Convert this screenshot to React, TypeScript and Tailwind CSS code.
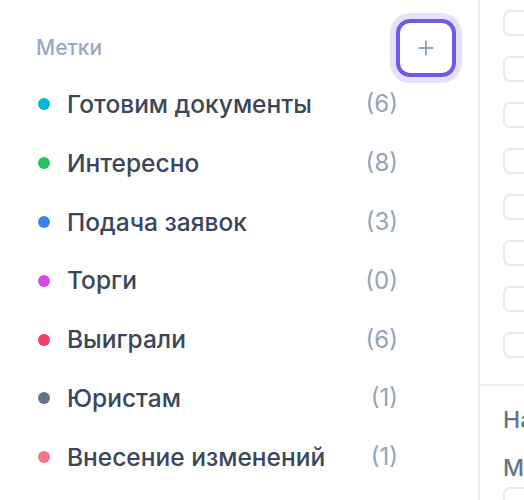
import React from 'react';

const labels = [
  { name: 'Готовим документы', count: 6, color: 'bg-[#06b6d4]' },
  { name: 'Интересно', count: 8, color: 'bg-[#22c55e]' },
  { name: 'Подача заявок', count: 3, color: 'bg-[#3b82f6]' },
  { name: 'Торги', count: 0, color: 'bg-[#d946ef]' },
  { name: 'Выиграли', count: 6, color: 'bg-[#f43f5e]' },
  { name: 'Юристам', count: 1, color: 'bg-[#64748b]' },
  { name: 'Внесение изменений', count: 1, color: 'bg-[#fb7185]' },
];

export default function App() {
  return (
    <div className="w-[524px] h-[500px] overflow-hidden bg-white flex font-['Inter',sans-serif]">
      {/* Labels panel */}
      <div className="w-[480px] shrink-0 border-r-2 border-[#e8ecf4] pl-[36px] pr-[22px] pt-[19px]">
        <div className="flex items-center justify-between">
          <span className="text-[21px] font-medium text-[#9aa8bd]">Метки</span>
          <button className="w-[60px] h-[58px] rounded-[14px] border-[4px] border-[#6c5ce7] shadow-[0_0_0_6px_#e6e2fb] flex items-center justify-center text-[#94a3b8]">
            <svg width="16" height="16" viewBox="0 0 16 16">
              <path d="M8 1.5v13M1.5 8h13" stroke="currentColor" strokeWidth="2" strokeLinecap="round" />
            </svg>
          </button>
        </div>

        <ul className="-mt-[2px] w-[362px] flex flex-col">
          {labels.map((l) => (
            <li key={l.name} className="h-[58.8px] flex items-center">
              <span className={`w-3 h-3 rounded-full ml-[2px] ${l.color}`} />
              <span className="ml-[17px] text-[24.5px] font-medium text-[#3a4659] flex-1 whitespace-nowrap">{l.name}</span>
              <span className="text-[24px] text-[#94a3b8]">({l.count})</span>
            </li>
          ))}
        </ul>
      </div>

      {/* Right panel (cut off) */}
      <div className="flex-1 flex flex-col">
        <div className="pl-[23px] pt-[10px] flex flex-col gap-[20px] pb-[26px]">
          {Array.from({ length: 8 }).map((_, i) => (
            <div key={i} className="w-[30px] h-[26px] rounded-[7px] border-2 border-[#e5e9f1]" />
          ))}
        </div>
        <div className="border-t-2 border-[#eef1f6] pl-[23px] pt-[17px]">
          <div className="text-[23px] font-medium text-[#64748b] whitespace-nowrap">Название</div>
          <div className="mt-[13px] text-[23px] font-medium text-[#64748b] whitespace-nowrap">Метки</div>
          <div className="mt-[2px] w-[30px] h-[26px] rounded-[7px] border-2 border-[#e5e9f1]" />
        </div>
      </div>
    </div>
  );
}
